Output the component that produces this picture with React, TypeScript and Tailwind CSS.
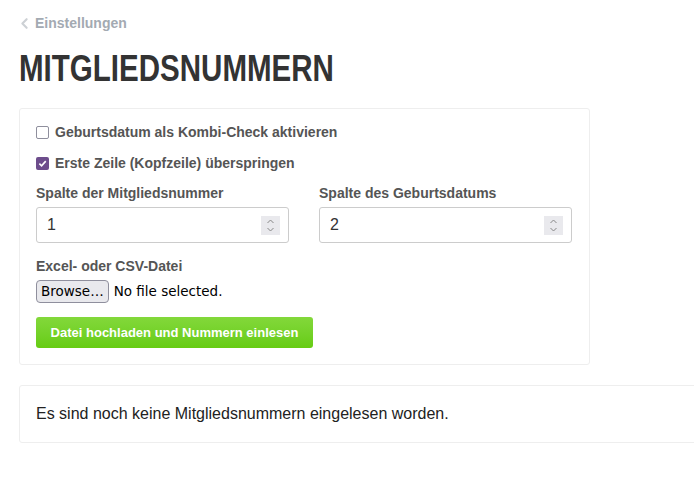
import { ChevronLeft } from 'lucide-react';

function Checkbox({ checked }: { checked: boolean }) {
  return checked ? (
    <span className="w-[13px] h-[13px] rounded-[2px] bg-[#6d4d8c] flex items-center justify-center shrink-0">
      <svg width="9" height="9" viewBox="0 0 10 10">
        <path d="M1.5 5.2 L4 7.6 L8.6 2.4" fill="none" stroke="#fff" strokeWidth="1.8" />
      </svg>
    </span>
  ) : (
    <span className="w-[13px] h-[13px] rounded-[2px] border border-[#8f8f9d] bg-white shrink-0" />
  );
}

function NumberField({ label, value }: { label: string; value: string }) {
  return (
    <div className="flex flex-col">
      <label className="text-[14px] font-bold text-[#555] mb-[5px] leading-[18px]">{label}</label>
      <div className="h-[36px] w-[253px] border border-[#ccc] rounded-[3px] bg-white flex items-center justify-between pl-[10px] pr-[8px]">
        <span className="text-[16px] text-[#333]">{value}</span>
        <span className="w-[19px] h-[19px] bg-[#e9e9ed] flex items-center justify-center">
          <svg width="9" height="15" viewBox="0 0 9 15">
            <path d="M1.5 5 L4.5 2 L7.5 5" fill="none" stroke="#888" strokeWidth="1" />
            <path d="M1.5 10 L4.5 13 L7.5 10" fill="none" stroke="#888" strokeWidth="1" />
          </svg>
        </span>
      </div>
    </div>
  );
}

export default function App() {
  return (
    <div className="min-h-[489px] bg-white overflow-hidden font-['Liberation_Sans',Arial,sans-serif]">
      <div className="pl-[19px] pt-[14px]">
        <a className="flex items-center gap-[2px] text-[14px] font-bold text-[#a3aab2] leading-[18px]">
          <ChevronLeft size={17} strokeWidth={3} className="text-[#cdd1d5] -ml-[3px]" />
          Einstellungen
        </a>

        <h1 className="mt-[14px] text-[37px] leading-[46px] font-bold text-[#333] origin-left scale-x-[0.798] whitespace-nowrap">
          MITGLIEDSNUMMERN
        </h1>

        {/* Upload form */}
        <div className="mt-[16px] w-[571px] border border-[#eee] rounded-[3px] px-[16px] pt-[14px] pb-[16px]">
          <label className="flex items-center gap-[6px] text-[14px] font-bold text-[#555] leading-[18px]">
            <Checkbox checked={false} />
            Geburtsdatum als Kombi-Check aktivieren
          </label>
          <label className="mt-[13px] flex items-center gap-[6px] text-[14px] font-bold text-[#555] leading-[18px]">
            <Checkbox checked={true} />
            Erste Zeile (Kopfzeile) überspringen
          </label>

          <div className="mt-[12px] flex gap-[30px]">
            <NumberField label="Spalte der Mitgliedsnummer" value="1" />
            <NumberField label="Spalte des Geburtsdatums" value="2" />
          </div>

          <div className="mt-[14px] text-[14px] font-bold text-[#555] leading-[18px]">Excel- oder CSV-Datei</div>
          <div className="mt-[5px] flex items-center gap-[5px]">
            <button className="h-[23px] px-[4px] border border-[#8f8f9d] rounded-[4px] bg-[#e9e9ed] text-black leading-none font-['DejaVu_Sans',sans-serif] text-[13.5px]">
              Browse…
            </button>
            <span className="text-black font-['DejaVu_Sans',sans-serif] text-[13.5px]">No file selected.</span>
          </div>

          <button className="mt-[14px] h-[31px] w-[277px] rounded-[3px] bg-gradient-to-b from-[#83d83a] to-[#66cc11] text-white text-[13px] font-bold">
            Datei hochladen und Nummern einlesen
          </button>
        </div>

        {/* Result */}
        <div className="mt-[20px] w-[700px] h-[58px] border border-[#eee] rounded-[3px] flex items-center pl-[16px]">
          <p className="text-[16px] text-[#222]">Es sind noch keine Mitgliedsnummern eingelesen worden.</p>
        </div>
      </div>
    </div>
  );
}
